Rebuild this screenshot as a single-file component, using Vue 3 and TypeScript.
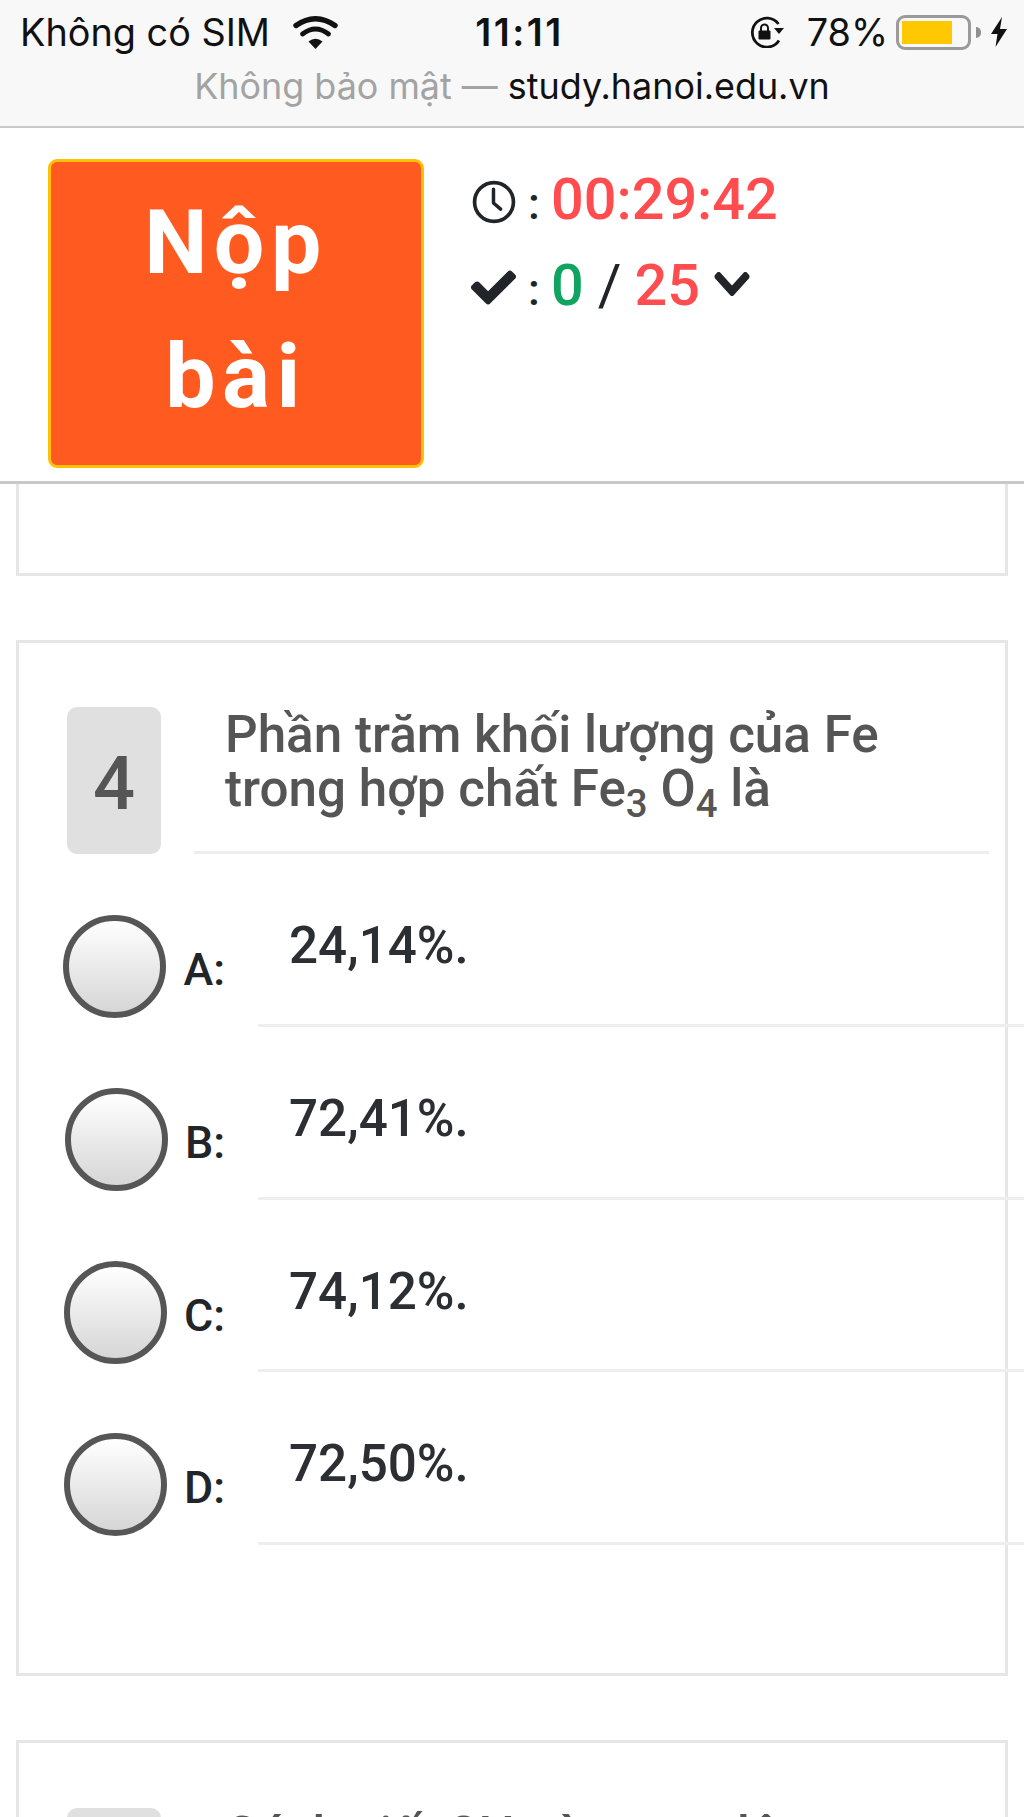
<script setup lang="ts">
interface Option { key: string; text: string }
const options: Option[] = [
  { key: 'A', text: '24,14%.' },
  { key: 'B', text: '72,41%.' },
  { key: 'C', text: '74,12%.' },
  { key: 'D', text: '72,50%.' },
]
</script>

<template>
  <div class="page">
    <div class="browser">
      <div class="status">
        <div class="status-left">
          <span>Không có SIM</span>
          <svg class="wifi" viewBox="0 0 45 33" aria-hidden="true">
            <path d="M3 9.5Q22.5-4 42 9.5" fill="none" stroke="#111" stroke-width="5.4" stroke-linecap="round" />
            <path d="M9.5 18Q22.5 8 35.5 18" fill="none" stroke="#111" stroke-width="4.8" stroke-linecap="round" />
            <path d="M15.5 25.5Q22.5 20 29.5 25.5L22.5 33Z" fill="#111" />
          </svg>
        </div>
        <span class="time">11:11</span>
        <div class="status-right">
          <svg class="lock" viewBox="0 0 37 32" aria-hidden="true">
            <path d="M30 24.5A14.5 14.5 0 1 1 29.5 8" fill="none" stroke="#111" stroke-width="2.8" />
            <path d="M27 13h10l-5 6Z" fill="#111" transform="translate(-2 -1)" />
            <rect x="9.5" y="14.5" width="12" height="9" rx="1" fill="#111" />
            <path d="M12 15v-3a3.5 3.5 0 0 1 7 0v3" fill="none" stroke="#111" stroke-width="2" />
          </svg>
          <span class="percent">78%</span>
          <span class="battery"><span class="battery-fill"></span></span>
          <span class="nub"></span>
          <svg class="bolt" viewBox="0 0 16 30" aria-hidden="true">
            <path d="M11 0 0 17h6.5L4.5 30 16 12H9Z" fill="#111" />
          </svg>
        </div>
      </div>
      <div class="address"><span class="insecure">Không bảo mật —</span> study.hanoi.edu.vn</div>
    </div>

    <header class="toolbar">
      <button class="submit" type="button">Nộp<br />bài</button>
      <div class="stats">
        <div class="stat">
          <svg class="ico clock" viewBox="0 0 43 43" aria-hidden="true">
            <circle cx="21.5" cy="21.5" r="19" fill="none" stroke="#212529" stroke-width="3.6" />
            <path d="M21 9v13.5l7 6" fill="none" stroke="#212529" stroke-width="3.4" stroke-linecap="round" stroke-linejoin="round" />
          </svg>
          <span class="colon">:</span>
          <span class="red">00:29:42</span>
        </div>
        <div class="stat">
          <svg class="ico check" viewBox="-10 55 532 402" aria-hidden="true">
            <path d="M173.898 439.404l-166.4-166.4c-9.997-9.997-9.997-26.206 0-36.204l36.203-36.204c9.997-9.998 26.207-9.998 36.204 0L192 312.69 432.095 72.596c9.997-9.997 26.207-9.997 36.204 0l36.203 36.204c9.997 9.997 9.997 26.206 0 36.204l-294.4 294.401c-9.998 9.997-26.207 9.997-36.204-.001z" fill="#212529" stroke="#212529" stroke-width="18" />
          </svg>
          <span class="colon">:</span>
          <span class="green">0</span>
          <span class="slash">/</span>
          <span class="red">25</span>
          <svg class="chevron" viewBox="-8 115 464 282" preserveAspectRatio="none" aria-hidden="true">
            <path d="M207.029 381.476L12.686 187.132c-9.373-9.373-9.373-24.569 0-33.941l22.667-22.667c9.357-9.357 24.522-9.375 33.901-.04L224 284.505l154.745-154.021c9.379-9.335 24.544-9.317 33.901.04l22.667 22.667c9.373 9.373 9.373 24.569 0 33.941L240.971 381.476c-9.373 9.372-24.569 9.372-33.942 0z" fill="#212529" stroke="#212529" stroke-width="16" />
          </svg>
        </div>
      </div>
    </header>

    <main class="list">
      <section class="card stub"></section>

      <section class="card main">
        <div class="question">
          <div class="num">4</div>
          <div class="qtext">Phần trăm khối lượng của Fe trong hợp chất Fe<sub>3</sub> O<sub>4</sub> là</div>
        </div>
        <div v-for="o in options" :key="o.key" class="opt">
          <div class="opt-left">
            <span class="radio"></span>
            <span class="opt-key">{{ o.key }}:</span>
          </div>
          <div class="opt-text">{{ o.text }}</div>
        </div>
      </section>

      <section class="card next">
        <div class="question">
          <div class="num"></div>
          <div class="qtext">Cách viết 3H nào sau đây</div>
        </div>
      </section>
    </main>
  </div>
</template>

<style scoped>
.page {
  width: 1024px;
  height: 1817px;
  overflow: hidden;
  background: #fff;
  font-family: Roboto, "Noto Sans", sans-serif;
  color: #212529;
}

.browser {
  height: 128px;
  box-sizing: border-box;
  background: #f8f8f8;
  border-bottom: 2px solid #c9c9c9;
  color: #111;
  font-family: Inter, "Liberation Sans", sans-serif;
  overflow: hidden;
}
.status {
  height: 64px;
  padding: 0 17px 0 20px;
  display: grid;
  grid-template-columns: 1fr auto 1fr;
  align-items: center;
  font-size: 37.8px;
}
.status-left { display: flex; align-items: center; gap: 23px; }
.wifi { width: 45px; height: 33px; }
.time { font-weight: 600; margin-left: 12px; letter-spacing: 2.5px; }
.status-right { display: flex; align-items: center; justify-content: flex-end; }
.lock { width: 37px; height: 32px; margin-right: 21px; }
.percent { margin-right: 8px; }
.battery {
  width: 75px;
  height: 35px;
  box-sizing: border-box;
  border: 3px solid #9a9a9a;
  border-radius: 9px;
  padding: 3px;
  display: block;
}
.battery-fill { display: block; width: 50px; height: 23px; background: #ffc800; }
.nub {
  width: 5px;
  height: 11px;
  margin: 0 10px 0 5px;
  background: #8f8f8f;
  border-radius: 0 6px 6px 0;
}
.bolt { width: 16px; height: 30px; }
.address { text-align: center; font-size: 35.9px; line-height: 44px; }
.insecure { color: #a3a3a3; }

.toolbar {
  height: 356px;
  box-sizing: border-box;
  padding: 31px 0 0 48px;
  border-bottom: 3px solid #c8c8c8;
  display: flex;
  gap: 49px;
  background: #fff;
}
.submit {
  width: 376px;
  height: 309px;
  box-sizing: border-box;
  background: #ff5a1f;
  border: 3px solid #ffc107;
  border-radius: 9px;
  color: #fff;
  font-family: inherit;
  font-weight: 700;
  font-size: 89.6px;
  line-height: 134.4px;
  padding: 0 0 7px;
  letter-spacing: 6.5px;
}
.stats { margin-top: -2px; }
.stat {
  display: flex;
  align-items: center;
  font-size: 57.6px;
  font-weight: 500;
  line-height: 86.4px;
  height: 86.4px;
}
.ico { flex: none; }
.clock { width: 44px; height: 44px; margin: 4px 0 0 -1px; }
.check { width: 45px; height: 35px; margin: 2px 0 0 -2px; }
.colon { font-size: 44.8px; margin: 7px 12px 0 12px; width: 11px; font-weight: 500; }
.red { color: #ff4d4f; }
.green { color: #0fa560; }
.slash { margin: 0 13px 0 14px; font-weight: 400; }
.chevron { width: 36px; height: 24px; margin: -6px 0 0 14px; }

.card {
  margin: 0 16px 64px;
  border: 3.2px solid #e6e6e6;
  background: #fff;
}
.stub { height: 88.5px; border-top: 0; }
.main { height: 1036.5px; padding-top: 64.5px; box-sizing: border-box; }
.next { padding-top: 64.5px; }

.question { display: flex; padding-left: 48px; }
.num {
  width: 94px;
  height: 147px;
  background: #e0e0e0;
  border-radius: 10px;
  color: #555;
  font-size: 74px;
  font-weight: 500;
  line-height: 154px;
  text-align: center;
  flex: none;
}
.qtext {
  margin: 0 16px 0 33px;
  padding: 1px 0 0 31px;
  width: 795px;
  box-sizing: border-box;
  border-bottom: 3.2px solid #eeeeee;
  color: #555;
  font-size: 51.2px;
  font-weight: 500;
  line-height: 53.5px;
  height: 147px;
}
.qtext sub { font-size: 38.4px; line-height: 0; }

.opt {
  width: 1005px;
  height: 172.8px;
  box-sizing: border-box;
  display: flex;
}
.opt-left {
  width: 206px;
  flex: none;
  box-sizing: border-box;
  padding-top: 61px;
  display: flex;
  justify-content: flex-end;
  align-items: flex-start;
  gap: 17px;
}
.radio {
  width: 103px;
  height: 103px;
  box-sizing: border-box;
  border: 6px solid #565656;
  border-radius: 50%;
  background: linear-gradient(#ffffff, #d6d6d6);
  flex: none;
}
.opt-key { font-size: 44.8px; font-weight: 500; line-height: 54px; margin-top: 28px; color: #212529; }
.opt-text {
  margin-left: 33px;
  flex: 1;
  box-sizing: border-box;
  border-bottom: 3.2px solid #eeeeee;
  padding: 62px 0 0 31px;
  font-size: 51.2px;
  font-weight: 500;
  line-height: 60px;
  color: #2b2f33;
}
</style>

<style>
html, body { margin: 0; background: #fff; }
</style>
